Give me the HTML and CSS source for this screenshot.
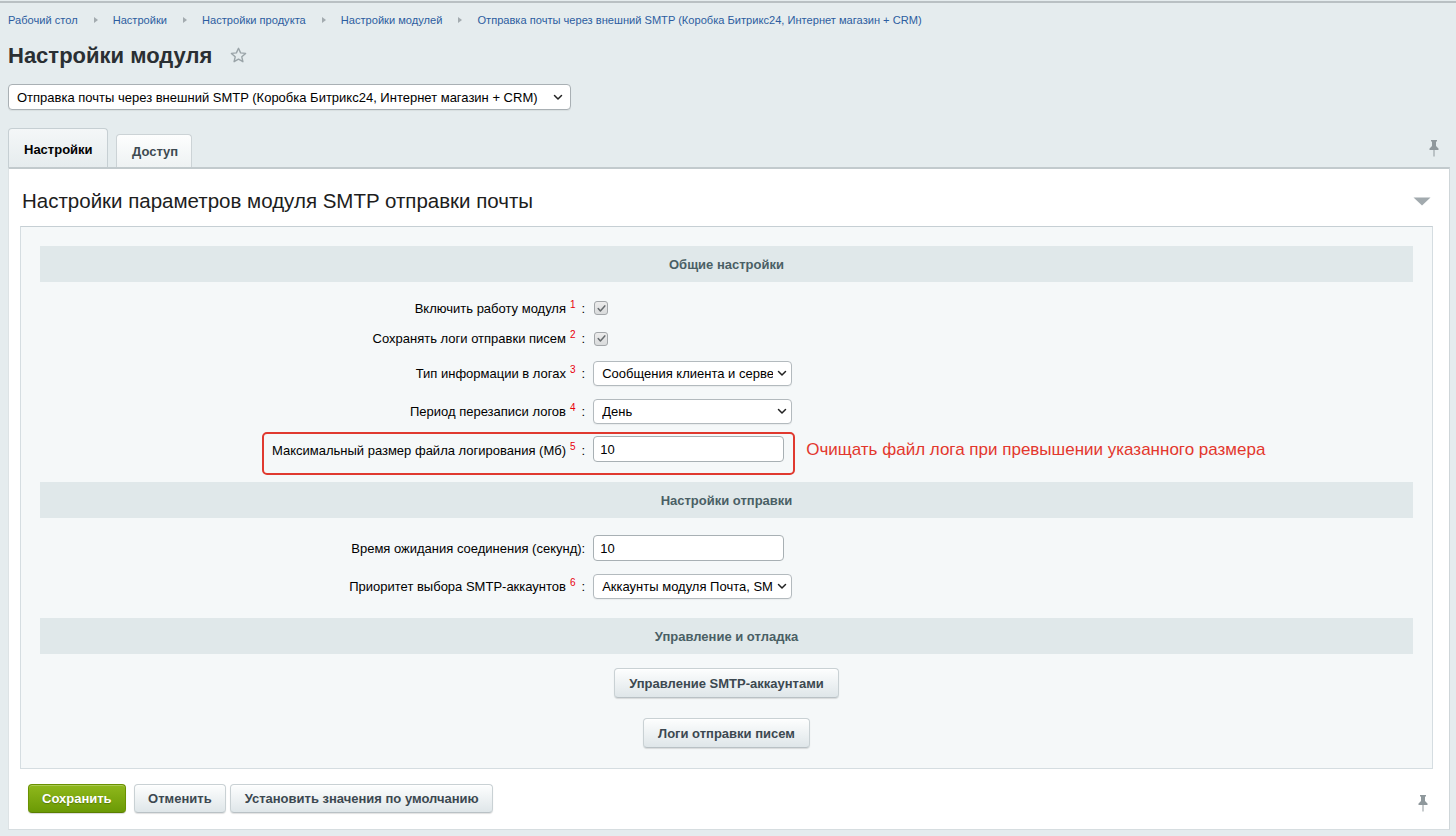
FILE: index.html
```html
<!DOCTYPE html>
<html lang="ru">
<head>
<meta charset="utf-8">
<title>Настройки модуля</title>
<link rel="stylesheet" href="styles.css">
</head>
<body>
<div class="page">
  <nav class="breadcrumbs">
    <a class="crumb">Рабочий стол</a><span class="sep"></span>
    <a class="crumb">Настройки</a><span class="sep"></span>
    <a class="crumb">Настройки продукта</a><span class="sep"></span>
    <a class="crumb">Настройки модулей</a><span class="sep"></span>
    <a class="crumb">Отправка почты через внешний SMTP (Коробка Битрикс24, Интернет магазин + CRM)</a>
  </nav>

  <div class="title-row">
    <h1 class="title">Настройки модуля</h1>
    <svg class="star" width="17" height="17" viewBox="0 0 17 17"><path d="M8.5 1.3l2.1 4.6 5 .5-3.8 3.4 1.1 4.9-4.4-2.6-4.4 2.6 1.1-4.9L1.4 6.4l5-.5z" fill="none" stroke="#9aa4a8" stroke-width="1.4" stroke-linejoin="round"/></svg>
  </div>

  <div class="module-select">
    <span class="select-text">Отправка почты через внешний SMTP (Коробка Битрикс24, Интернет магазин + CRM)</span>
    <svg class="chev" width="10" height="7" viewBox="0 0 10 7"><path d="M1.5 1.5l3.5 3.5 3.5-3.5" fill="none" stroke="#222" stroke-width="1.5" stroke-linecap="round" stroke-linejoin="round"/></svg>
  </div>

  <div class="tabs">
    <div class="tab tab-active">Настройки</div>
    <div class="tab tab-inactive">Доступ</div>
    <svg class="pin pin-top" width="12" height="18" viewBox="0 0 12 18"><path d="M3 1h6v1.5H8v4.5l2.5 2.5V11h-4v6.5h-1V11h-4V9.5L4 7V2.5H3z" fill="#8f989c"/></svg>
  </div>

  <div class="panel">
    <div class="panel-head">
      <div class="panel-title">Настройки параметров модуля SMTP отправки почты</div>
      <svg class="collapse" width="18" height="9" viewBox="0 0 18 9"><path d="M0.5 0.5h17L9 8.5z" fill="#a2aaae"/></svg>
    </div>

    <div class="content-box">
      <table class="form">
        <tr class="heading"><td colspan="2">Общие настройки</td></tr>
        <tr class="spacer s11"><td colspan="2"></td></tr>
        <tr class="r30">
          <td class="lbl">Включить работу модуля<sup class="req">1</sup>:</td>
          <td class="ctl"><span class="check"><svg width="11" height="11" viewBox="0 0 11 11"><path d="M2.2 5.6l2.2 2.3 4.4-5" fill="none" stroke="#666b6e" stroke-width="1.5" stroke-linecap="round" stroke-linejoin="round"/></svg></span></td>
        </tr>
        <tr class="r31">
          <td class="lbl">Сохранять логи отправки писем<sup class="req">2</sup>:</td>
          <td class="ctl"><span class="check"><svg width="11" height="11" viewBox="0 0 11 11"><path d="M2.2 5.6l2.2 2.3 4.4-5" fill="none" stroke="#666b6e" stroke-width="1.5" stroke-linecap="round" stroke-linejoin="round"/></svg></span></td>
        </tr>
        <tr class="r38">
          <td class="lbl">Тип информации в логах<sup class="req">3</sup>:</td>
          <td class="ctl"><div class="sel"><span class="select-text">Сообщения клиента и сервера</span><svg class="chev" width="10" height="7" viewBox="0 0 10 7"><path d="M1.5 1.5l3.5 3.5 3.5-3.5" fill="none" stroke="#222" stroke-width="1.5" stroke-linecap="round" stroke-linejoin="round"/></svg></div></td>
        </tr>
        <tr class="r39">
          <td class="lbl">Период перезаписи логов<sup class="req">4</sup>:</td>
          <td class="ctl"><div class="sel"><span class="select-text">День</span><svg class="chev" width="10" height="7" viewBox="0 0 10 7"><path d="M1.5 1.5l3.5 3.5 3.5-3.5" fill="none" stroke="#222" stroke-width="1.5" stroke-linecap="round" stroke-linejoin="round"/></svg></div></td>
        </tr>
        <tr class="r39">
          <td class="lbl">Максимальный размер файла логирования (Мб)<sup class="req">5</sup>:</td>
          <td class="ctl marked"><input class="txt" type="text" value="10"><span class="note">Очищать файл лога при превышении указанного размера</span><span class="redbox"></span></td>
        </tr>
        <tr class="spacer s12"><td colspan="2"></td></tr>

        <tr class="heading"><td colspan="2">Настройки отправки</td></tr>
        <tr class="spacer s11"><td colspan="2"></td></tr>
        <tr class="r38">
          <td class="lbl">Время ожидания соединения (секунд):</td>
          <td class="ctl"><input class="txt" type="text" value="10"></td>
        </tr>
        <tr class="r39">
          <td class="lbl">Приоритет выбора SMTP-аккаунтов<sup class="req">6</sup>:</td>
          <td class="ctl"><div class="sel"><span class="select-text">Аккаунты модуля Почта, SMTP-аккаунты</span><svg class="chev" width="10" height="7" viewBox="0 0 10 7"><path d="M1.5 1.5l3.5 3.5 3.5-3.5" fill="none" stroke="#222" stroke-width="1.5" stroke-linecap="round" stroke-linejoin="round"/></svg></div></td>
        </tr>
        <tr class="spacer s12"><td colspan="2"></td></tr>

        <tr class="heading"><td colspan="2">Управление и отладка</td></tr>
        <tr>
          <td colspan="2" class="center-cell">
            <div class="btn-stack">
              <button class="btn">Управление SMTP-аккаунтами</button>
              <button class="btn">Логи отправки писем</button>
            </div>
          </td>
        </tr>
      </table>
    </div>

    <div class="footer">
      <button class="btn btn-save">Сохранить</button>
      <button class="btn btn-cancel">Отменить</button>
      <button class="btn">Установить значения по умолчанию</button>
      <svg class="pin pin-bottom" width="12" height="18" viewBox="0 0 12 18"><path d="M3 1h6v1.5H8v4.5l2.5 2.5V11h-4v6.5h-1V11h-4V9.5L4 7V2.5H3z" fill="#8f989c"/></svg>
    </div>
  </div>
</div>
</body>
</html>
```

FILE: styles.css
```css
html, body {
  margin: 0;
  padding: 0;
}

body {
  background: #e5ecee;
  font-family: "Liberation Sans", Arial, Helvetica, sans-serif;
  color: #000;
  border-top: 2px solid #b9c0c3;
  margin-top: 1px;
  min-height: 833px;
  box-sizing: border-box;
}

.page {
  padding: 0 6px 0 8px;
}

/* breadcrumbs */
.breadcrumbs {
  padding-top: 9px;
  height: 16px;
  line-height: 16px;
  font-size: 11.1px;
  display: flex;
  align-items: center;
  white-space: nowrap;
}

.crumb {
  color: #2c5da0;
  text-decoration: none;
}

.sep {
  display: inline-block;
  width: 0;
  height: 0;
  border-top: 3.5px solid transparent;
  border-bottom: 3.5px solid transparent;
  border-left: 4px solid #a3abaf;
  margin: 0 15px 0 16px;
}

/* title */
.title-row {
  display: flex;
  align-items: center;
  margin-top: 14px;
  height: 28px;
}

.title {
  margin: 0;
  font-size: 22px;
  line-height: 28px;
  font-weight: bold;
  color: #2a2f33;
}

.star {
  margin-left: 18px;
  margin-top: -2px;
}

/* module select */
.module-select {
  margin-top: 14px;
  width: 563px;
  height: 26px;
  box-sizing: border-box;
  background: #fff;
  border: 1px solid #a9b0b4;
  border-radius: 4px;
  display: flex;
  align-items: center;
  padding: 0 7px 0 8px;
  font-size: 13px;
  box-shadow: 0 1px 1px rgba(0,0,0,0.06);
}

.select-text {
  flex: 1;
  overflow: hidden;
  white-space: nowrap;
}

.chev {
  flex: none;
  margin-left: 4px;
}

/* tabs */
.tabs {
  margin-top: 18px;
  height: 39px;
  display: flex;
  align-items: flex-end;
}

.tab {
  box-sizing: border-box;
  font-size: 13px;
  font-weight: bold;
  line-height: 16px;
  border: 1px solid #ccd3d6;
  border-bottom: none;
  border-radius: 4px 4px 0 0;
}

.tab-active {
  width: 100px;
  height: 39px;
  padding: 13px 0 0 15px;
  color: #000;
  background: linear-gradient(#f4f7f8, #e6ecee);
  border-color: #c6cfd3;
}

.tab-inactive {
  margin-left: 8px;
  width: 76px;
  height: 33px;
  padding: 9px 0 0 15px;
  color: #3d4a51;
  background: linear-gradient(#fdfefe, #eef2f3);
}

.pin-top {
  margin-left: auto;
  margin-right: 10px;
  align-self: flex-start;
  margin-top: 11px;
}

/* panel */
.panel {
  background: #fff;
  border-top: 2px solid #c2cacd;
  border-right: 1px solid #cfd6d9;
  border-left: 1px solid #dde3e5;
  border-bottom: 1px solid #d6dde0;
  padding: 0 16px 16px 11px;
}

.panel-head {
  display: flex;
  align-items: center;
  justify-content: space-between;
  padding-top: 20px;
  height: 24px;
  margin-bottom: 13px;
}

.panel-title {
  font-size: 20.5px;
  line-height: 24px;
  color: #1d1d1d;
  margin-left: 2px;
}

.collapse {
  margin-right: 2px;
}

.content-box {
  background: #f5f8f9;
  border: 1px solid #d5dde1;
  border-top-color: #c6cfd4;
  padding: 19px 19px 20px 19px;
}

/* form table */
.form {
  width: 100%;
  border-collapse: collapse;
  font-size: 13px;
}

.form td {
  padding: 0;
}

.heading td {
  height: 36px;
  background: #e0e8ea;
  text-align: center;
  font-weight: bold;
  color: #4a5f65;
  font-size: 13px;
}

.spacer.s11 td { height: 11px; }
.spacer.s12 td { height: 12px; }

.r30 td { height: 30px; }
.r31 td { height: 31px; }
.r38 td { height: 38px; }
.r39 td { height: 39px; }

.lbl {
  width: 40%;
  text-align: right;
  padding-right: 4px !important;
  vertical-align: middle;
  white-space: nowrap;
}

.req {
  color: #e8000b;
  font-size: 10px;
  margin: 0 6px 0 4px;
  vertical-align: 5px;
  line-height: 0;
}

.ctl {
  padding-left: 4px !important;
  vertical-align: middle;
  white-space: nowrap;
}

.check {
  display: inline-flex;
  align-items: center;
  justify-content: center;
  width: 14px;
  height: 14px;
  box-sizing: border-box;
  border: 1px solid #a3a7aa;
  border-radius: 3px;
  background: linear-gradient(#ececec, #d9dbdc);
  vertical-align: middle;
  margin-left: 1px;
  margin-top: -2px;
}

.sel {
  width: 199px;
  height: 25px;
  box-sizing: border-box;
  background: #fff;
  border: 1px solid #b3babe;
  border-radius: 4px;
  display: flex;
  align-items: center;
  padding: 0 4px 0 8px;
  font-size: 13px;
  box-shadow: 0 1px 1px rgba(0,0,0,0.05);
}

.txt {
  width: 191px;
  height: 26px;
  box-sizing: border-box;
  border: 1px solid #a8b0b4;
  border-radius: 4px;
  padding: 0 6px;
  font-family: "Liberation Sans", Arial, sans-serif;
  font-size: 13px;
  color: #000;
  background: #fff;
  vertical-align: middle;
  margin: 0;
}

.marked {
  position: relative;
}

.marked .txt {
  margin-top: -3px;
}

.note {
  color: #e3372d;
  font-size: 17px;
  margin-left: 22px;
  vertical-align: middle;
  position: relative;
  top: -1px;
}

.redbox {
  position: absolute;
  left: -327px;
  top: 1px;
  width: 533px;
  height: 43px;
  box-sizing: border-box;
  border: 2px solid #e0392f;
  border-radius: 5px;
  pointer-events: none;
}

.center-cell {
  text-align: center;
}

.btn-stack {
  display: flex;
  flex-direction: column;
  align-items: center;
  gap: 20px;
  padding-top: 14px;
}

/* buttons */
.btn {
  height: 30px;
  box-sizing: border-box;
  padding: 0 14px;
  font-family: "Liberation Sans", Arial, sans-serif;
  font-size: 13px;
  font-weight: bold;
  color: #3c4850;
  background: linear-gradient(#fdfefe, #dfe6e9);
  border: 1px solid #c9d1d4;
  border-bottom-color: #b9c1c5;
  border-radius: 4px;
  box-shadow: 0 1px 1px rgba(0,0,0,0.12), inset 0 1px 0 #fff;
  margin: 0;
}

.footer {
  display: flex;
  align-items: center;
  padding-top: 15px;
  padding-left: 8px;
}

.footer .btn {
  height: 29px;
  margin-right: 4px;
  padding: 0 13.5px;
}

.footer .btn-save {
  margin-right: 8px;
  color: #fff;
  background: linear-gradient(#8fb81c, #6b9a05);
  border: 1px solid #6a9100;
  border-bottom-color: #5b7f00;
  text-shadow: 0 1px 1px rgba(0,0,0,0.25);
  box-shadow: 0 1px 1px rgba(0,0,0,0.15), inset 0 1px 0 rgba(255,255,255,0.25);
  padding: 0 13px;
}

.pin-bottom {
  margin-left: auto;
  margin-right: 4px;
  margin-top: 8px;
}
```
